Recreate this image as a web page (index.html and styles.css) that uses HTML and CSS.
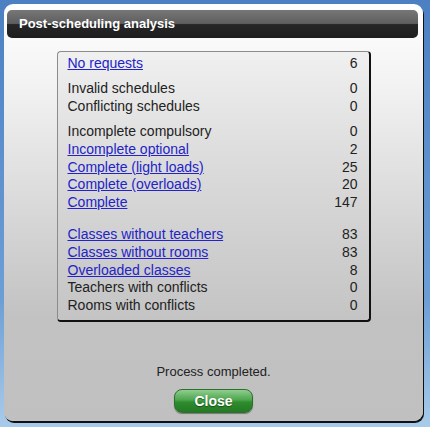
FILE: index.html
```html
<!DOCTYPE html>
<html lang="en">
<head>
  <meta charset="UTF-8">
  <title>Post-scheduling analysis</title>
  <link rel="stylesheet" href="styles.css">
</head>
<body>
  <div class="dialog">
    <div class="titleBar">Post-scheduling analysis</div>

    <div class="panel">
      <div class="group">
        <div class="row"><a href="#">No requests</a><span>6</span></div>
      </div>
      <div class="group">
        <div class="row"><span>Invalid schedules</span><span>0</span></div>
        <div class="row"><span>Conflicting schedules</span><span>0</span></div>
      </div>
      <div class="group">
        <div class="row"><span>Incomplete compulsory</span><span>0</span></div>
        <div class="row"><a href="#">Incomplete optional</a><span>2</span></div>
        <div class="row"><a href="#">Complete (light loads)</a><span>25</span></div>
        <div class="row"><a href="#">Complete (overloads)</a><span>20</span></div>
        <div class="row"><a href="#">Complete</a><span>147</span></div>
      </div>
      <div class="group wide">
        <div class="row"><a href="#">Classes without teachers</a><span>83</span></div>
        <div class="row"><a href="#">Classes without rooms</a><span>83</span></div>
        <div class="row"><a href="#">Overloaded classes</a><span>8</span></div>
        <div class="row"><span>Teachers with conflicts</span><span>0</span></div>
        <div class="row"><span>Rooms with conflicts</span><span>0</span></div>
      </div>
    </div>

    <div class="status">Process completed.</div>
    <button class="closeBtn">Close</button>
  </div>
</body>
</html>
```

FILE: styles.css
```css
html, body {
  height: 100%;
}
body {
  margin: 0;
  padding: 4px;
  box-sizing: border-box;
  font-family: "Liberation Sans", Arial, sans-serif;
  font-size: 14px;
  color: #222;
  background: linear-gradient(#4c80c2, #6c9ed6 70%, #a9cbea);
}
.dialog {
  width: 419px;
  height: 417px;
  box-sizing: border-box;
  border-radius: 9px;
  background: linear-gradient(#ffffff, #f2f2f2 20%, #c2c2c2 75%, #c0c0c0);
  box-shadow: 1px 2px 0 #111;
  padding-top: 6px;
  display: flex;
  flex-direction: column;
  align-items: center;
}
.titleBar {
  align-self: flex-start;
  margin-left: 3px;
  width: 411px;
  height: 28px;
  box-sizing: border-box;
  border-radius: 5px;
  background: linear-gradient(#777, #5e5e5e 48%, #262626 52%, #1e1e1e);
  color: #fff;
  font-weight: bold;
  font-size: 13px;
  line-height: 28px;
  padding-left: 12px;
}
.panel {
  margin-top: 13px;
  width: 314px;
  height: 271px;
  box-sizing: border-box;
  border: 1px solid #8c8c8c;
  border-right: 2px solid #111;
  border-bottom: 2px solid #111;
  border-radius: 4px;
  background: linear-gradient(#f0f0f0, #dcdcdc 40%, #c4c4c4);
  padding: 3px 11px 0 10px;
}
.group {
  margin-bottom: 7.6px;
}
.group.wide {
  margin-top: 14.6px;
}
.row {
  display: flex;
  justify-content: space-between;
  line-height: 17.7px;
  height: 17.7px;
}
.row a {
  color: #2323c8;
  text-decoration: underline;
}
.status {
  margin-top: 42px;
  font-size: 13px;
  line-height: 16px;
}
.closeBtn {
  margin-top: 9px;
  width: 79px;
  height: 24px;
  border: 1px solid #2e6f2e;
  border-radius: 8px;
  background: linear-gradient(#8fcd8f, #4da64d 45%, #2f8c2f 55%, #237a23);
  color: #fff;
  font-family: "Liberation Sans", Arial, sans-serif;
  font-weight: bold;
  font-size: 14px;
  text-shadow: 0 1px 1px #1a4d1a;
  box-shadow: 0 1px 1px #777;
  padding: 0;
}
```
